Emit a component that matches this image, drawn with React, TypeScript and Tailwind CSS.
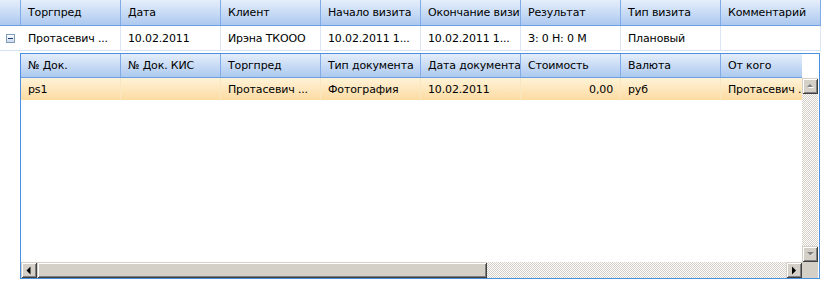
import React from "react";

const outerHeaders = ["Торгпред", "Дата", "Клиент", "Начало визита", "Окончание визита", "Результат", "Тип визита", "Комментарий"];
const outerRow = ["Протасевич ...", "10.02.2011", "Ирэна ТКООО", "10.02.2011 1...", "10.02.2011 1...", "З: 0 Н: 0 М", "Плановый", ""];
const innerHeaders = ["№ Док.", "№ Док. КИС", "Торгпред", "Тип документа", "Дата документа", "Стоимость", "Валюта", "От кого"];
const innerRow = ["ps1", "", "Протасевич ...", "Фотография", "10.02.2011", "0,00", "руб", "Протасевич ..."];

const btn =
  "bg-[#d4d0c8] shadow-[inset_1px_1px_0_#d4d0c8,inset_-1px_-1px_0_#404040,inset_2px_2px_0_#ffffff,inset_-2px_-2px_0_#808080] flex items-center justify-center";
const checker = "bg-[repeating-conic-gradient(#d4d0c8_0_25%,#ffffff_0_50%)] bg-[length:2px_2px]";

function Arrow({ dir, disabled }: { dir: "up" | "down" | "left" | "right"; disabled?: boolean }) {
  const fill = disabled ? "#808080" : "#000000";
  if (dir === "up")
    return (
      <svg width="9" height="6" viewBox="0 0 9 6">
        {disabled && <polygon points="2,5 5,2 8,5" fill="#ffffff" />}
        <polygon points="1,4 4,1 7,4" fill={fill} />
      </svg>
    );
  if (dir === "down")
    return (
      <svg width="9" height="6" viewBox="0 0 9 6">
        {disabled && <polygon points="2,2 8,2 5,5" fill="#ffffff" />}
        <polygon points="1,1 8,1 4.5,4.5" fill={fill} />
      </svg>
    );
  if (dir === "left")
    return (
      <svg width="6" height="9" viewBox="0 0 6 9">
        <polygon points="4.5,0.5 4.5,8.5 0.5,4.5" fill={fill} />
      </svg>
    );
  return (
    <svg width="6" height="9" viewBox="0 0 6 9">
      <polygon points="1,0.5 1,8.5 5,4.5" fill={fill} />
    </svg>
  );
}

export default function App() {
  return (
    <div className="w-[823px] h-[282px] bg-white overflow-hidden font-['DejaVu_Sans',sans-serif] text-[11px] tracking-[-0.15px] leading-none text-black">
      {/* outer header */}
      <div className="flex h-[26px] w-[821px] border-b border-[#6d9fe2] bg-[linear-gradient(#e5eefb,#acc9ef)]">
        <div className="w-[21px] flex-none border-r border-[#80abe6]" />
        {outerHeaders.map((h, i) => (
          <div
            key={i}
            className="w-[100px] flex-none border-r border-[#80abe6] pl-[7px] flex items-center overflow-hidden whitespace-nowrap"
          >
            {h}
          </div>
        ))}
      </div>
      {/* outer data row */}
      <div className="flex h-[25px] w-[821px] border-b border-[#d3e1f3]">
        <div className="w-[21px] flex-none flex items-center pl-[6px]">
          <div className="w-[9px] h-[9px] border border-[#7f9db9] bg-[linear-gradient(#ffffff,#c9d8ee)] flex items-center justify-center">
            <div className="w-[5px] h-[1px] bg-[#1f3b6b]" />
          </div>
        </div>
        {outerRow.map((c, i) => (
          <div
            key={i}
            className="w-[100px] flex-none border-r border-[#dbe7f6] pl-[7px] flex items-center overflow-hidden whitespace-nowrap"
          >
            {c}
          </div>
        ))}
      </div>
      {/* nested grid */}
      <div className="pl-[20px] pt-[2px]">
        <div className="w-[800px] h-[226px] border border-[#4b8fe1] grid grid-cols-[781px_17px] grid-rows-[208px_16px]">
          <div className="flex flex-col overflow-hidden">
            <div className="flex h-[24px] flex-none border-b border-[#6d9fe2] bg-[linear-gradient(#e5eefb,#acc9ef)]">
              {innerHeaders.map((h, i) => (
                <div
                  key={i}
                  className="w-[100px] flex-none border-r border-[#80abe6] pl-[7px] flex items-center overflow-hidden whitespace-nowrap"
                >
                  {h}
                </div>
              ))}
            </div>
            <div className="flex h-[22px] flex-none bg-[linear-gradient(#fff3d8,#fcdba2)]">
              {innerRow.map((c, i) => (
                <div
                  key={i}
                  className={
                    "w-[100px] flex-none border-r border-[#fbe6c2] flex items-center overflow-hidden whitespace-nowrap " +
                    (i === 5 ? "justify-end pr-[7px]" : "pl-[7px]")
                  }
                >
                  {c}
                </div>
              ))}
            </div>
          </div>
          <div className="flex flex-col">
            <div className="h-[24px] flex-none bg-white" />
            <div className="flex flex-col flex-1 w-[16px]">
              <div className={btn + " h-[16px] flex-none"}>
                <Arrow dir="up" disabled />
              </div>
              <div className={"flex-1 " + checker} />
              <div className={btn + " h-[16px] flex-none"}>
                <Arrow dir="down" disabled />
              </div>
            </div>
          </div>
          <div className="flex h-[16px]">
            <div className={btn + " w-[16px] flex-none"}>
              <Arrow dir="left" />
            </div>
            <div className={"flex-1 flex " + checker}>
              <div className={btn + " w-[450px] flex-none"} />
            </div>
            <div className={btn + " w-[16px] flex-none"}>
              <Arrow dir="right" />
            </div>
          </div>
          <div className="bg-[#d4d0c8] w-[16px]" />
        </div>
      </div>
    </div>
  );
}
